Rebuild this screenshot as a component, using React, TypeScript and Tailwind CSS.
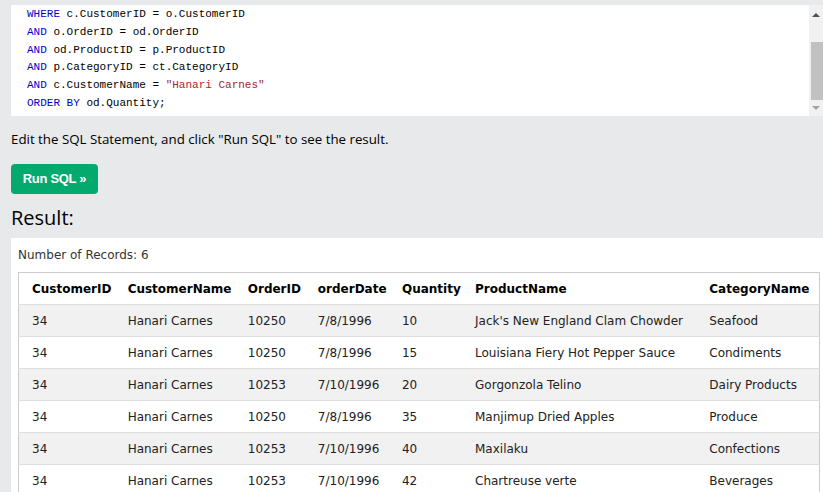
import React from 'react'

const mono = { fontFamily: '"Liberation Mono", monospace' }

const rows = [
  ['34', 'Hanari Carnes', '10250', '7/8/1996', '10', "Jack's New England Clam Chowder", 'Seafood'],
  ['34', 'Hanari Carnes', '10250', '7/8/1996', '15', 'Louisiana Fiery Hot Pepper Sauce', 'Condiments'],
  ['34', 'Hanari Carnes', '10253', '7/10/1996', '20', 'Gorgonzola Telino', 'Dairy Products'],
  ['34', 'Hanari Carnes', '10250', '7/8/1996', '35', 'Manjimup Dried Apples', 'Produce'],
  ['34', 'Hanari Carnes', '10253', '7/10/1996', '40', 'Maxilaku', 'Confections'],
  ['34', 'Hanari Carnes', '10253', '7/10/1996', '42', 'Chartreuse verte', 'Beverages'],
]

const headers = ['CustomerID', 'CustomerName', 'OrderID', 'orderDate', 'Quantity', 'ProductName', 'CategoryName']
const widths = ['w-[102px]', 'w-[120px]', 'w-[70px]', 'w-[84px]', 'w-[73px]', 'w-[234px]', 'w-[117px]']

function Kw({ children }: { children: React.ReactNode }) {
  return <span className="text-[#0000cd]">{children}</span>
}

function CodeBox() {
  return (
    <div className="flex h-[111px] bg-white">
      <div className="flex-1 pl-4 pt-[1px] text-[11px] leading-[17.8px] text-black" style={mono}>
        <div><Kw>WHERE</Kw> c.CustomerID = o.CustomerID</div>
        <div><Kw>AND</Kw> o.OrderID = od.OrderID</div>
        <div><Kw>AND</Kw> od.ProductID = p.ProductID</div>
        <div><Kw>AND</Kw> p.CategoryID = ct.CategoryID</div>
        <div><Kw>AND</Kw> c.CustomerName = <span className="text-[#a52a2a]">"Hanari Carnes"</span></div>
        <div><Kw>ORDER BY</Kw> od.Quantity;</div>
      </div>
      {/* scrollbar */}
      <div className="flex w-[14px] flex-col items-end bg-[#f1f1f1]">
        <div className="flex h-[17px] w-full items-center justify-center pt-[3px]">
          <div className="h-0 w-0 border-x-[4px] border-b-[4px] border-x-transparent border-b-[#505050]" />
        </div>
        <div className="mt-[20px] h-[58px] w-[12px] bg-[#c1c1c1]" />
        <div className="flex flex-1 w-full items-center justify-center">
          <div className="h-0 w-0 border-x-[4px] border-t-[4px] border-x-transparent border-t-[#a3a3a3]" />
        </div>
      </div>
    </div>
  )
}

export default function App() {
  return (
    <div className="h-[492px] w-[823px] overflow-hidden bg-[#e7e9eb] pl-[11px] pt-[5px]" style={{ fontFamily: '"Open Sans", sans-serif' }}>
      <CodeBox />

      <p className="mt-[13px] text-[13.3px] leading-[20px] text-black">
        Edit the SQL Statement, and click "Run SQL" to see the result.
      </p>

      <button className="mt-[15px] flex h-[30px] w-[87px] items-center justify-center rounded-[4px] bg-[#04aa6d] text-[13px] font-bold tracking-[-0.3px] text-white" style={{ fontFamily: '"Liberation Sans", sans-serif' }}>
        Run SQL »
      </button>

      <h2 className="mt-[10px] text-[20px] leading-[28px] text-black">Result:</h2>

      <div className="mt-[6px] bg-white px-[7px] pb-4 pt-[9px]" style={{ fontFamily: '"DejaVu Sans", sans-serif' }}>
        <div className="text-[12px] leading-[17px] text-[#333]">Number of Records: 6</div>
        <table className="mt-[8px] w-[802px] table-fixed border-collapse border border-[#cccccc] text-[12px] text-black">
          <thead>
            <tr className="h-[32px] border-b border-[#dddddd] bg-white">
              {headers.map((h, i) => (
                <th key={h} className={`${widths[i]} ${i === 0 ? 'pl-[13px]' : 'pl-[7px]'} text-left font-bold`}>{h}</th>
              ))}
            </tr>
          </thead>
          <tbody>
            {rows.map((r, ri) => (
              <tr key={ri} className={`h-[32px] border-b border-[#dddddd] ${ri % 2 === 0 ? 'bg-[#f1f1f1]' : 'bg-white'}`}>
                {r.map((c, ci) => (
                  <td key={ci} className={`${ci === 0 ? 'pl-[13px]' : 'pl-[7px]'} whitespace-nowrap text-[#222]`}>{c}</td>
                ))}
              </tr>
            ))}
          </tbody>
        </table>
      </div>
    </div>
  )
}
